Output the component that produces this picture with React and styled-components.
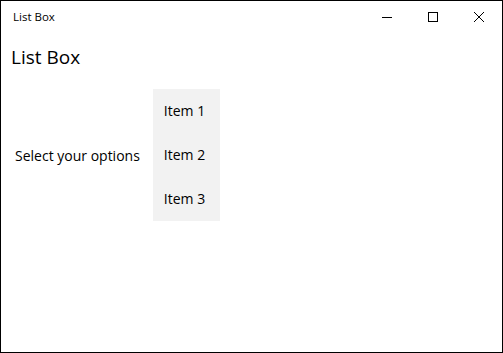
import React from 'react';
import styled, { createGlobalStyle } from 'styled-components';

const Global = createGlobalStyle`
  html, body { margin: 0; padding: 0; background: #fff; }
  body { font-family: "Open Sans", "Noto Sans", sans-serif; color: #000; }
`;

const Window = styled.div`
  width: 503px;
  height: 353px;
  box-sizing: border-box;
  border: 1px solid #000;
  display: flex;
  flex-direction: column;
  background: #fff;
`;

const TitleBar = styled.div`
  height: 31px;
  display: flex;
  align-items: center;
`;

const Title = styled.div`
  flex: 1;
  padding-left: 12px;
  font-size: 11.5px;
  line-height: 1;
`;

const CaptionButton = styled.div`
  width: 46px;
  height: 31px;
  display: flex;
  align-items: center;
  justify-content: center;
`;

const Content = styled.div`
  padding: 12px 10px 0;
`;

const Heading = styled.h1`
  margin: 0;
  font-size: 19px;
  font-weight: 400;
  line-height: 26px;
`;

const Row = styled.div`
  margin-top: 19px;
  display: flex;
  align-items: center;
  gap: 13px;
`;

const Label = styled.span`
  padding-left: 4px;
  font-size: 14px;
`;

const List = styled.ul`
  margin: 0;
  padding: 0;
  list-style: none;
  width: 67px;
  background: #f2f2f2;
`;

const Item = styled.li`
  height: 44px;
  box-sizing: border-box;
  padding: 0 0 2px 11px;
  display: flex;
  align-items: center;
  font-size: 14px;
`;

export default function App() {
  return (
    <>
      <Global />
      <Window>
        <TitleBar>
          <Title>List Box</Title>
          <CaptionButton>
            <svg width="10" height="10" viewBox="0 0 10 10">
              <path d="M0 5.5h10" stroke="#000" strokeWidth="1" />
            </svg>
          </CaptionButton>
          <CaptionButton>
            <svg width="10" height="10" viewBox="0 0 10 10">
              <rect x="0.5" y="0.5" width="9" height="9" fill="none" stroke="#000" />
            </svg>
          </CaptionButton>
          <CaptionButton>
            <svg width="10" height="10" viewBox="0 0 10 10">
              <path d="M0 0L10 10M10 0L0 10" stroke="#000" strokeWidth="1" />
            </svg>
          </CaptionButton>
        </TitleBar>
        <Content>
          <Heading>List Box</Heading>
          <Row>
            <Label>Select your options</Label>
            <List>
              {['Item 1', 'Item 2', 'Item 3'].map(t => (
                <Item key={t}>{t}</Item>
              ))}
            </List>
          </Row>
        </Content>
      </Window>
    </>
  );
}
